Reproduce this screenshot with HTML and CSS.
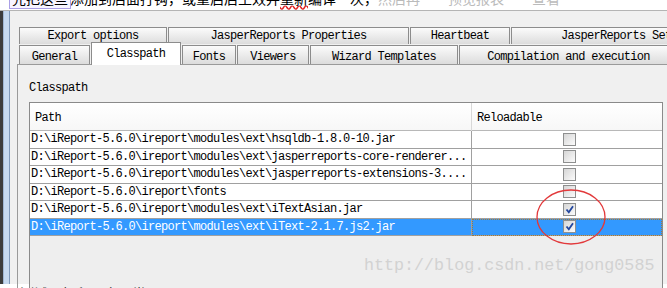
FILE: index.html
```html
<!DOCTYPE html>
<html lang="zh-CN">
<head>
    <meta charset="UTF-8">
    <title>Classpath</title>
    <link rel="stylesheet" href="styles.css">
</head>
<body>

    <div class="note note-top"><div class="note-line"><span class="hl">先把这些</span>添加到后面打钩，或重启后生效并<span class="wavy">重新</span>编译一次，<span class="faint">然后再　　预览报表　　查看</span></div></div>

    <div class="win">
        <div class="desk"></div>
        <div class="dialog">
            <div class="tabs">
                <div class="tab-row back">
                    <div class="tab">Export options</div>
                    <div class="tab">JasperReports Properties</div>
                    <div class="tab">Heartbeat</div>
                    <div class="tab">JasperReports Settings</div>
                </div>
                <div class="tab-row front">
                    <div class="tab">General</div>
                    <div class="tab active">Classpath</div>
                    <div class="tab">Fonts</div>
                    <div class="tab">Viewers</div>
                    <div class="tab">Wizard Templates</div>
                    <div class="tab">Compilation and execution</div>
                </div>
            </div>

            <div class="panel">
                <div class="label">Classpath</div>
                <div class="pane">
                    <div class="grid-head">
                        <div class="th">Path</div>
                        <div class="th">Reloadable</div>
                    </div>
                    <div class="tr">
                        <div class="td">D:\iReport-5.6.0\ireport\modules\ext\hsqldb-1.8.0-10.jar</div>
                        <div class="td chk"><span class="cb"></span></div>
                    </div>
                    <div class="tr">
                        <div class="td">D:\iReport-5.6.0\ireport\modules\ext\jasperreports-core-renderer...</div>
                        <div class="td chk"><span class="cb"></span></div>
                    </div>
                    <div class="tr">
                        <div class="td">D:\iReport-5.6.0\ireport\modules\ext\jasperreports-extensions-3....</div>
                        <div class="td chk"><span class="cb"></span></div>
                    </div>
                    <div class="tr">
                        <div class="td">D:\iReport-5.6.0\ireport\fonts</div>
                        <div class="td chk"><span class="cb"></span></div>
                    </div>
                    <div class="tr">
                        <div class="td">D:\iReport-5.6.0\ireport\modules\ext\iTextAsian.jar</div>
                        <div class="td chk"><span class="cb on"><svg viewBox="0 0 11 11" width="11" height="11"><path d="M2.5 5.5 L4.8 8.3 L9 2.2" fill="none" stroke="#23479f" stroke-width="1.8"/></svg></span></div>
                    </div>
                    <div class="tr sel">
                        <div class="td">D:\iReport-5.6.0\ireport\modules\ext\iText-2.1.7.js2.jar</div>
                        <div class="td chk focus"><span class="cb on"><svg viewBox="0 0 11 11" width="11" height="11"><path d="M2.5 5.5 L4.8 8.3 L9 2.2" fill="none" stroke="#23479f" stroke-width="1.8"/></svg></span></div>
                    </div>
                </div>
            </div>
        </div>
    </div>

    <div class="note note-bottom">测试，打印日文正常显示了。</div>

    <!-- 标注：红圈和水印 -->
    <svg class="ring" width="74" height="60" viewBox="0 0 74 60"><ellipse cx="36" cy="29" rx="34" ry="27" fill="none" stroke="#e2393b" stroke-width="1.3"/></svg>
    <div class="mark">http://blog.csdn.net/gong0585</div>

</body>
</html>
```

FILE: styles.css
```css
/* iReport 选项对话框 */
:root {
    --bg: #f0f0f0; --line: #a0a0a0; --dark: #8c8c8c;
    --sel: #3399ff; --text: #000;
}
body { margin: 0; width: 667px; height: 288px; overflow: hidden; background: #fff; color: var(--text); font-family: 'Liberation Mono', monospace; font-size: 12px; position: relative; }

.note { font-family: 'Noto Sans CJK SC', sans-serif; font-size: 14px; line-height: 16px; white-space: nowrap; overflow: hidden; }
.note-top { height: 10px; }
.note-line { margin-top: -10px; }
.hl { padding: 0 2px; margin-left: 10px; outline: 1px solid #aa9fe6; background: #f7f5ff; }
.wavy { text-decoration: underline wavy #e02020; }
.faint { color: #bbb; }
.note-bottom { height: 5px; padding-left: 20px; line-height: 18px; color: #333; }

.win { display: flex; height: 273px; border-top: 1px solid #b4b4b4; }
.desk { width: 10px; flex-shrink: 0; background: linear-gradient(to right, #3c3c3c 0 3px, #9fb6d3 3px 4px, #c6d9ef 4px 9px, #7f98b8 9px 10px); }
.dialog { flex: 1; min-width: 0; background: var(--bg); padding: 16px 0 0 7px; display: flex; flex-direction: column; }

.tabs { margin-left: 2px; }
.tab-row { display: grid; }
.back { grid-template-columns: 149px 242px 101px 244px; height: 17px; }
.front { grid-template-columns: 72px 91px 55px 73px 149px 220px; height: 20px; }
.tab { border: 1px solid var(--dark); border-bottom: none; margin-right: 1px; background: linear-gradient(#fbfbfb, #dcdcdc); text-align: center; letter-spacing: -0.7px; white-space: nowrap; overflow: hidden; }
.back .tab { line-height: 17px; }
.front .tab { line-height: 22px; margin-top: 1px; }
.front .tab.active { background: #fff; margin: -2px 1px -1px 0; position: relative; z-index: 1; line-height: 22px; }

.panel { flex: 1; border-top: 1px solid #9a9a9a; border-left: 1px solid #9a9a9a; padding-left: 11px; }
.label { margin-top: 15px; line-height: 16px; letter-spacing: -0.7px; }
.pane { margin-top: 6px; width: 632px; height: 190px; border: 1px solid #8a8a8a; background: #eeeeee; }

.grid-head, .tr { display: grid; grid-template-columns: 442px 1fr; }
.grid-head { height: 27px; background: linear-gradient(#fff, #f7f7f7); border-bottom: 1px solid #b8b8b8; box-shadow: 0 1px 0 #e0e0e0; }
.th { line-height: 30px; padding-left: 5px; letter-spacing: -0.7px; }
.th:first-child { border-right: 1px solid #d8d8d8; }

.tr { height: 17.5px; background: #fff; }
.td { border-bottom: 1px solid var(--line); line-height: 17px; padding-left: 1px; letter-spacing: -0.7px; white-space: nowrap; overflow: hidden; }
.td:first-child { border-right: 1px solid var(--line); }
.chk { display: flex; justify-content: center; align-items: center; padding: 0 0 0 4px; }
.cb { width: 11px; height: 11px; border: 1px solid #8e8f8f; background: linear-gradient(135deg, #d6d6d6, #fbfbfb); display: block; }
.cb svg { display: block; }

.sel { background: var(--sel); color: #fff; }
.focus { outline: 1px dotted #a07a3a; outline-offset: -1px; }

.ring { position: absolute; left: 535px; top: 188px; }
.mark { position: absolute; left: 364px; top: 256px; font-size: 16.7px; color: #d2d2d2; line-height: 20px; }
```
